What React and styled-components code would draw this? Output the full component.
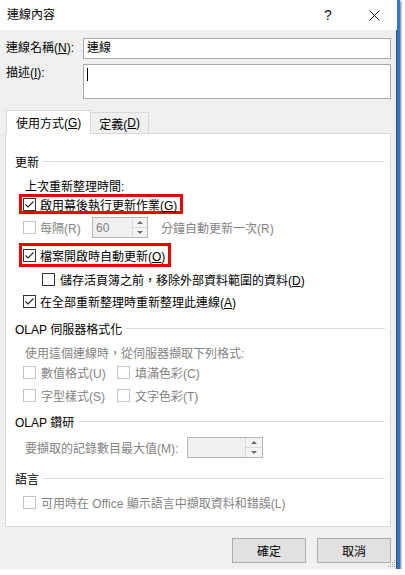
import React from "react";
import styled, { createGlobalStyle } from "styled-components";

const GlobalStyle = createGlobalStyle`
  html, body { margin: 0; padding: 0; background: #fff; }
  body {
    font-family: "Liberation Sans", "Noto Sans CJK TC", sans-serif;
    font-size: 12px;
    color: #000;
  }
`;

const Window = styled.div`
  position: relative;
  width: 400px;
  height: 569px;
  box-sizing: border-box;
  background: #f0f0f0;
  border-right: 3px solid #2a78d0;
  box-shadow: inset -1px 0 0 #4a4a4a, 0 2px 2px 1px rgba(0, 0, 0, 0.55);
  display: flex;
  flex-direction: column;
`;

const TitleBar = styled.div`
  height: 30px;
  background: #fff;
  display: flex;
  align-items: center;
  padding-left: 7px;
`;

const Title = styled.div`
  flex: 1;
  line-height: 16px;
`;

const TitleButton = styled.div`
  width: 46px;
  height: 30px;
  display: flex;
  align-items: center;
  justify-content: center;
  font-size: 14px;
  color: #111;
`;

const Body = styled.div`
  flex: 1;
  display: flex;
  flex-direction: column;
  padding: 0 6px 0 5px;
`;

const FieldRow = styled.div`
  display: grid;
  grid-template-columns: 78px 1fr;
  align-items: ${(p) => (p.$top ? "start" : "center")};
  margin-top: ${(p) => p.$mt}px;
`;

const FieldLabel = styled.div`
  padding-left: 1px;
  line-height: 17px;
  white-space: nowrap;
`;

const TextBox = styled.div`
  height: ${(p) => p.$h}px;
  box-sizing: border-box;
  border: 1px solid #a9a9a9;
  background: #fff;
  padding: 2px 3px;
  line-height: 15px;
  display: flex;
  align-items: ${(p) => (p.$top ? "flex-start" : "center")};
`;

const Caret = styled.span`
  display: block;
  width: 1px;
  height: 13px;
  margin-top: 1px;
  background: #000;
`;

const TabStrip = styled.div`
  display: flex;
  align-items: flex-end;
  margin: 11px 0 0 1px;
  position: relative;
  z-index: 1;
`;

const Tab = styled.div`
  height: ${(p) => (p.$active ? 24 : 21)}px;
  box-sizing: border-box;
  padding: 0 ${(p) => (p.$active ? 9 : 8)}px;
  border: 1px solid #d9d9d9;
  border-bottom: none;
  margin-bottom: ${(p) => (p.$active ? -1 : 0)}px;
  margin-left: ${(p) => (p.$active ? 0 : -1)}px;
  background: ${(p) => (p.$active ? "#fff" : "#f0f0f0")};
  display: flex;
  align-items: center;
  white-space: nowrap;
`;

const Panel = styled.div`
  width: 386px;
  height: 394px;
  box-sizing: border-box;
  background: #fff;
  border: 1px solid #d9d9d9;
  padding: 0 5px 0 9px;
  display: flex;
  flex-direction: column;
`;

const Section = styled.div`
  display: flex;
  align-items: center;
  gap: 4px;
  height: 16px;
  margin-top: ${(p) => p.$mt}px;
  white-space: nowrap;
`;

const Rule = styled.div`
  flex: 1;
  height: 1px;
  background: #dcdcdc;
`;

const Row = styled.div`
  display: flex;
  align-items: center;
  gap: ${(p) => p.$gap ?? 4}px;
  height: ${(p) => p.$h ?? 16}px;
  margin-top: ${(p) => p.$mt ?? 0}px;
  padding-left: ${(p) => p.$indent ?? 0}px;
  color: ${(p) => (p.$disabled ? "#838383" : "#000")};
  white-space: nowrap;
`;

const RedBox = styled.div`
  display: flex;
  align-items: center;
  gap: 4px;
  width: fit-content;
  height: ${(p) => p.$h}px;
  box-sizing: border-box;
  margin: ${(p) => p.$mt}px 0 0 4px;
  padding: 0 3px 0 1px;
  border: 3px solid #f20000;
  white-space: nowrap;
`;

const FixedLabel = styled.span`
  display: inline-block;
  width: ${(p) => p.$w}px;
`;

const OptionGrid = styled.div`
  display: grid;
  grid-template-columns: 94px 1fr;
  margin-top: ${(p) => p.$mt}px;
  padding-left: 8px;
  row-gap: 7px;
  color: #838383;
`;

const GridCell = styled.div`
  display: flex;
  align-items: center;
  gap: 5px;
  height: 16px;
  white-space: nowrap;
`;

const Box = styled.span`
  width: 13px;
  height: 13px;
  flex: none;
  box-sizing: border-box;
  border: 1px solid ${(p) => (p.$disabled ? "#c4c4c4" : "#333")};
  background: #fff;
  display: inline-flex;
`;

const U = styled.span`
  text-decoration: underline;
  text-underline-offset: 1px;
`;

const Spin = styled.div`
  display: flex;
  width: ${(p) => p.$w}px;
  height: 21px;
  box-sizing: border-box;
  border: 1px solid #b4b4b4;
  background: #f0f0f0;
  margin-right: ${(p) => p.$mr ?? 0}px;
`;

const SpinValue = styled.div`
  flex: 1;
  padding-left: 3px;
  display: flex;
  align-items: center;
  color: #838383;
`;

const SpinButtons = styled.div`
  width: ${(p) => p.$bw}px;
  display: flex;
  flex-direction: column;
  border-left: 1px solid #dadada;
  background: #f4f4f4;
`;

const SpinHalf = styled.div`
  flex: 1;
  display: flex;
  align-items: center;
  justify-content: center;
  & + & { border-top: 1px solid #dadada; }
`;

const Arrow = styled.span`
  width: 0;
  height: 0;
  border-left: 3px solid transparent;
  border-right: 3px solid transparent;
  ${(p) => (p.$down ? "border-top" : "border-bottom")}: 3px solid #6a6a6a;
`;

const ButtonRow = styled.div`
  display: flex;
  justify-content: flex-end;
  gap: 11px;
  margin-top: 11px;
`;

const Button = styled.div`
  width: 74px;
  height: 25px;
  box-sizing: border-box;
  border: 1px solid #adadad;
  background: #e1e1e1;
  display: flex;
  align-items: center;
  justify-content: center;
`;

const Grip = styled.svg`
  position: absolute;
  right: 1px;
  bottom: 1px;
`;

function Checkbox({ checked, disabled }) {
  return (
    <Box $disabled={disabled}>
      {checked && (
        <svg width="11" height="11" viewBox="0 0 11 11">
          <path d="M1.5 5.5 L4 8 L9.5 2.5" fill="none" stroke="#222" strokeWidth="1.1" />
        </svg>
      )}
    </Box>
  );
}

function SpinBox({ w, bw, value, mr }) {
  return (
    <Spin $w={w} $mr={mr}>
      <SpinValue>{value}</SpinValue>
      <SpinButtons $bw={bw}>
        <SpinHalf><Arrow /></SpinHalf>
        <SpinHalf><Arrow $down /></SpinHalf>
      </SpinButtons>
    </Spin>
  );
}

export default function App() {
  return (
    <>
      <GlobalStyle />
      <Window>
        <TitleBar>
          <Title>連線內容</Title>
          <TitleButton>?</TitleButton>
          <TitleButton>
            <svg width="11" height="11" viewBox="0 0 11 11">
              <path d="M0.5 0.5 L10.5 10.5 M10.5 0.5 L0.5 10.5" stroke="#111" strokeWidth="1" />
            </svg>
          </TitleButton>
        </TitleBar>

        <Body>
          <FieldRow $mt={8}>
            <FieldLabel>連線名稱(<U>N</U>):</FieldLabel>
            <TextBox $h={21}>連線</TextBox>
          </FieldRow>
          <FieldRow $mt={5} $top>
            <FieldLabel style={{ paddingTop: 1 }}>描述(<U>I</U>):</FieldLabel>
            <TextBox $h={35} $top><Caret /></TextBox>
          </FieldRow>

          <TabStrip>
            <Tab $active>使用方式(<U>G</U>)</Tab>
            <Tab>定義(<U>D</U>)</Tab>
          </TabStrip>

          <Panel>
            <Section $mt={19}>更新<Rule /></Section>
            <Row $mt={8} $indent={10}>上次重新整理時間:</Row>
            <RedBox $h={20} $mt={1}>
              <Checkbox checked />
              <span>啟用幕後執行更新作業(<U>G</U>)</span>
            </RedBox>
            <Row $mt={3} $h={21} $indent={8} $disabled>
              <Checkbox disabled />
              <FixedLabel $w={48}>每隔(R)</FixedLabel>
              <SpinBox w={56} bw={14} value="60" mr={9} />
              <span>分鐘自動更新一次(R)</span>
            </Row>
            <RedBox $h={24} $mt={5}>
              <Checkbox checked />
              <span>檔案開啟時自動更新(<U>O</U>)</span>
            </RedBox>
            <Row $mt={4} $indent={27} $gap={5}>
              <Checkbox />
              <span>儲存活頁簿之前，移除外部資料範圍的資料(<U>D</U>)</span>
            </Row>
            <Row $mt={6} $indent={8}>
              <Checkbox checked />
              <span>在全部重新整理時重新整理此連線(<U>A</U>)</span>
            </Row>

            <Section $mt={11}>OLAP 伺服器格式化<Rule /></Section>
            <Row $mt={8} $indent={10} $disabled>使用這個連線時，從伺服器擷取下列格式:</Row>
            <OptionGrid $mt={4}>
              <GridCell><Checkbox disabled />數值格式(U)</GridCell>
              <GridCell><Checkbox disabled />填滿色彩(C)</GridCell>
              <GridCell><Checkbox disabled />字型樣式(S)</GridCell>
              <GridCell><Checkbox disabled />文字色彩(T)</GridCell>
            </OptionGrid>

            <Section $mt={10}>OLAP 鑽研<Rule /></Section>
            <Row $mt={8} $h={21} $indent={10} $disabled>
              <FixedLabel $w={158}>要擷取的記錄數目最大值(M):</FixedLabel>
              <SpinBox w={76} bw={16} value="" />
            </Row>

            <Section $mt={12}>語言<Rule /></Section>
            <Row $mt={8} $indent={8} $gap={5} $disabled>
              <Checkbox disabled />
              <span>可用時在 Office 顯示語言中擷取資料和錯誤(L)</span>
            </Row>
          </Panel>

          <ButtonRow>
            <Button>確定</Button>
            <Button>取消</Button>
          </ButtonRow>
        </Body>

        <Grip width="8" height="8" viewBox="0 0 8 8">
          <g fill="#a0a0a0">
            <rect x="6" y="0" width="1" height="1" />
            <rect x="4" y="2" width="1" height="1" />
            <rect x="6" y="2" width="1" height="1" />
            <rect x="2" y="4" width="1" height="1" />
            <rect x="4" y="4" width="1" height="1" />
            <rect x="6" y="4" width="1" height="1" />
            <rect x="0" y="6" width="1" height="1" />
            <rect x="2" y="6" width="1" height="1" />
            <rect x="4" y="6" width="1" height="1" />
            <rect x="6" y="6" width="1" height="1" />
          </g>
        </Grip>
      </Window>
    </>
  );
}
